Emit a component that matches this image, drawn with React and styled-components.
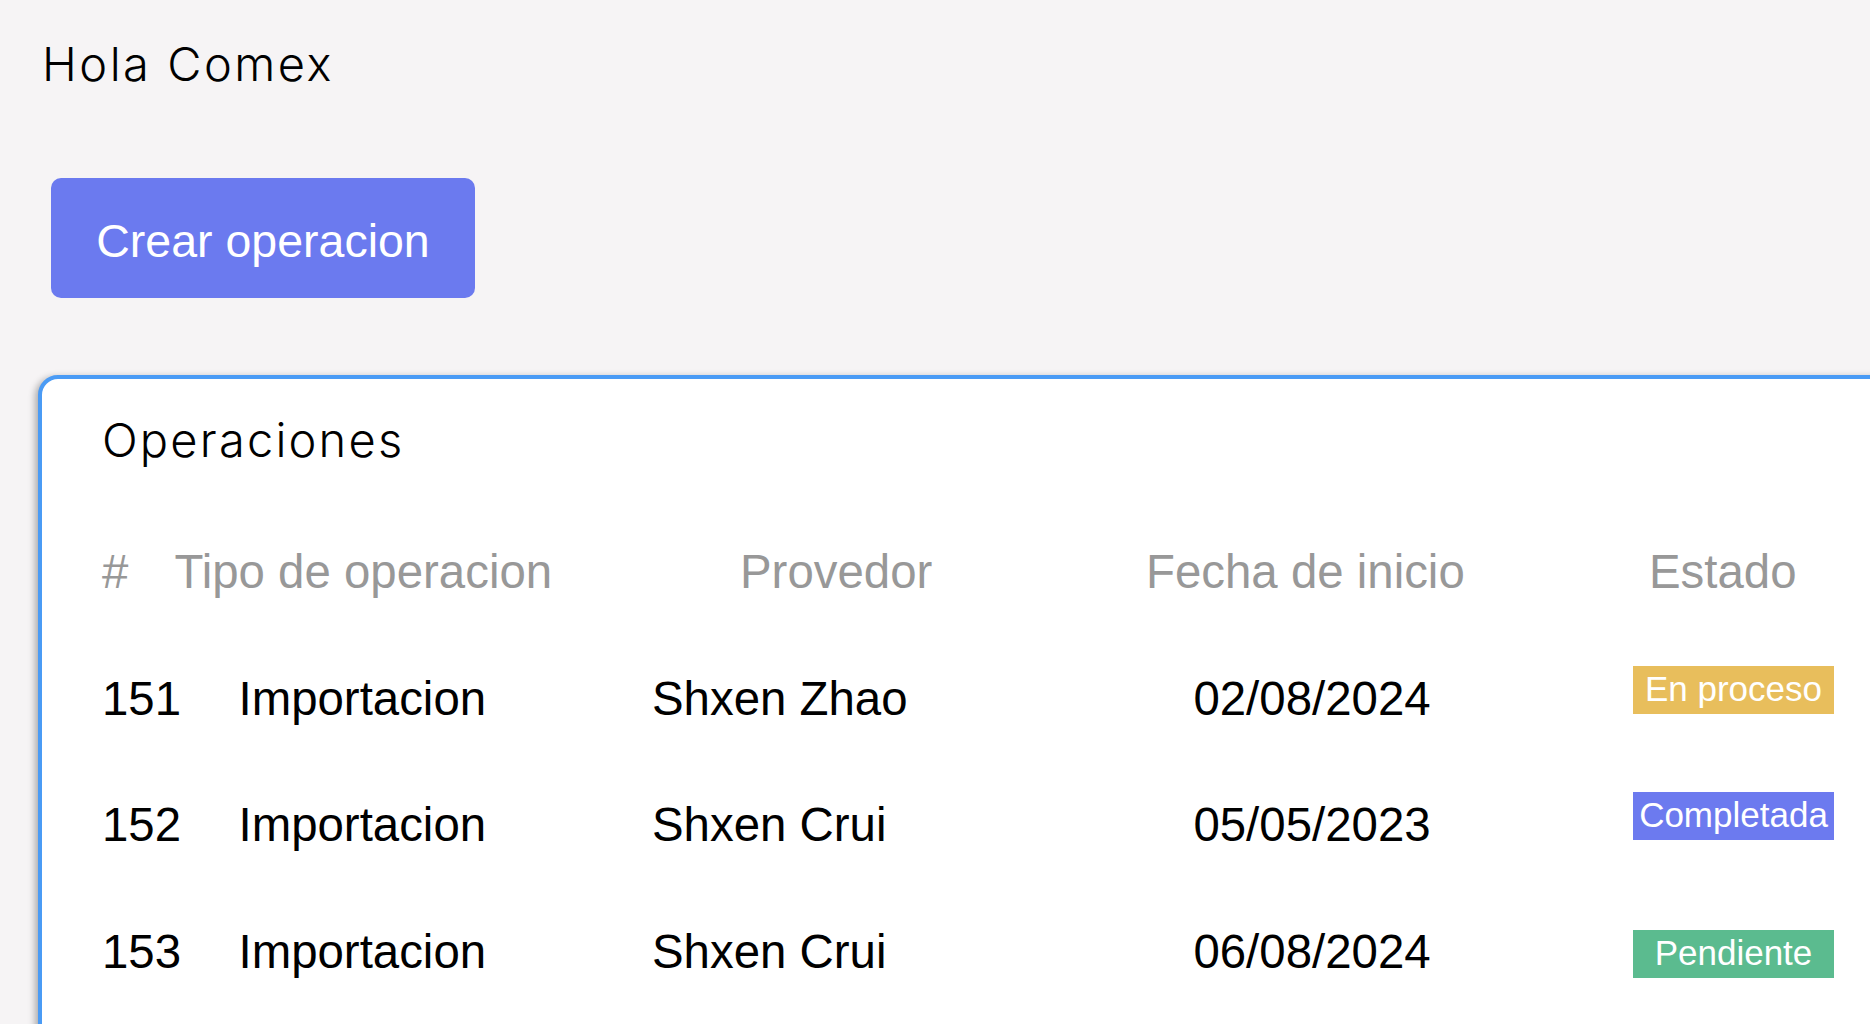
import React from "react";
import styled, { createGlobalStyle } from "styled-components";

const GlobalStyle = createGlobalStyle`
  html, body {
    margin: 0;
    padding: 0;
    background: #f6f4f5;
    overflow: hidden;
  }
  body {
    font-family: "Liberation Sans", Arial, sans-serif;
    color: #000;
  }
`;

const Page = styled.div`
  min-height: 100vh;
  width: 100%;
  overflow: hidden;
  padding-top: 40px;
  box-sizing: border-box;
`;

const Greeting = styled.h1`
  margin: 0 0 0 42px;
  font-family: Inter, "Liberation Sans", sans-serif;
  font-weight: 300;
  font-size: 47px;
  line-height: 47px;
  letter-spacing: 2.5px;
`;

const CreateButton = styled.button`
  display: block;
  margin: 91px 0 0 51px;
  width: 424px;
  height: 120px;
  border: none;
  border-radius: 10px;
  background: #6b7aef;
  color: #fff;
  font-family: "Liberation Sans", Arial, sans-serif;
  font-size: 46.5px;
  padding: 5px 0 0;
  cursor: pointer;
`;

const Card = styled.section`
  margin: 77px 0 0 38px;
  width: 1900px;
  min-height: 700px;
  background: #fff;
  border: 4px solid #4a9bf5;
  border-radius: 20px;
  box-shadow: -3px 2px 7px rgba(0, 0, 0, 0.3);
  padding: 37px 0 0 60px;
  box-sizing: border-box;
`;

const CardTitle = styled.h2`
  margin: 0;
  font-family: Inter, "Liberation Sans", sans-serif;
  font-weight: 300;
  font-size: 47px;
  line-height: 47px;
  letter-spacing: 2.2px;
`;

const Table = styled.div`
  display: flex;
  flex-direction: column;
  gap: 72.6px;
  margin-top: 82px;
`;

const HeadRow = styled.div`
  display: grid;
  grid-template-columns: 72.5px 565.5px 406px 503px auto;
  font-size: 47.4px;
  line-height: 54px;
  color: #989898;
`;

const Row = styled.div`
  display: grid;
  grid-template-columns: 136.5px 413.5px 448px 424px auto;
  align-items: start;
  font-size: 47.4px;
  line-height: 54px;
  color: #000;
`;

const Cell = styled.div`
  text-align: ${(p) => (p.center ? "center" : "left")};
  white-space: nowrap;
`;

const BADGE_COLORS = {
  "En proceso": "#e8be5c",
  Completada: "#6c7aef",
  Pendiente: "#5bbb8f",
};

const Badge = styled.span`
  display: block;
  width: 201px;
  height: 48px;
  margin: ${(p) => p.$offset}px 0 0 109px;
  background: ${(p) => BADGE_COLORS[p.$status]};
  color: #fff;
  font-size: 35px;
  line-height: 46px;
  text-align: center;
  white-space: nowrap;
`;

const operations = [
  { id: 151, tipo: "Importacion", proveedor: "Shxen Zhao", fecha: "02/08/2024", estado: "En proceso", offset: -6 },
  { id: 152, tipo: "Importacion", proveedor: "Shxen Crui", fecha: "05/05/2023", estado: "Completada", offset: -6 },
  { id: 153, tipo: "Importacion", proveedor: "Shxen Crui", fecha: "06/08/2024", estado: "Pendiente", offset: 5 },
];

const App = () => (
  <>
    <GlobalStyle />
    <Page>
      <Greeting>Hola Comex</Greeting>
      <CreateButton>Crear operacion</CreateButton>
      <Card>
        <CardTitle>Operaciones</CardTitle>
        <Table>
          <HeadRow>
            <Cell>#</Cell>
            <Cell>Tipo de operacion</Cell>
            <Cell>Provedor</Cell>
            <Cell>Fecha de inicio</Cell>
            <Cell>Estado</Cell>
          </HeadRow>
          {operations.map((op) => (
            <Row key={op.id}>
              <Cell>{op.id}</Cell>
              <Cell>{op.tipo}</Cell>
              <Cell>{op.proveedor}</Cell>
              <Cell center>{op.fecha}</Cell>
              <Badge $status={op.estado} $offset={op.offset}>
                {op.estado}
              </Badge>
            </Row>
          ))}
        </Table>
      </Card>
    </Page>
  </>
);

export default App;
